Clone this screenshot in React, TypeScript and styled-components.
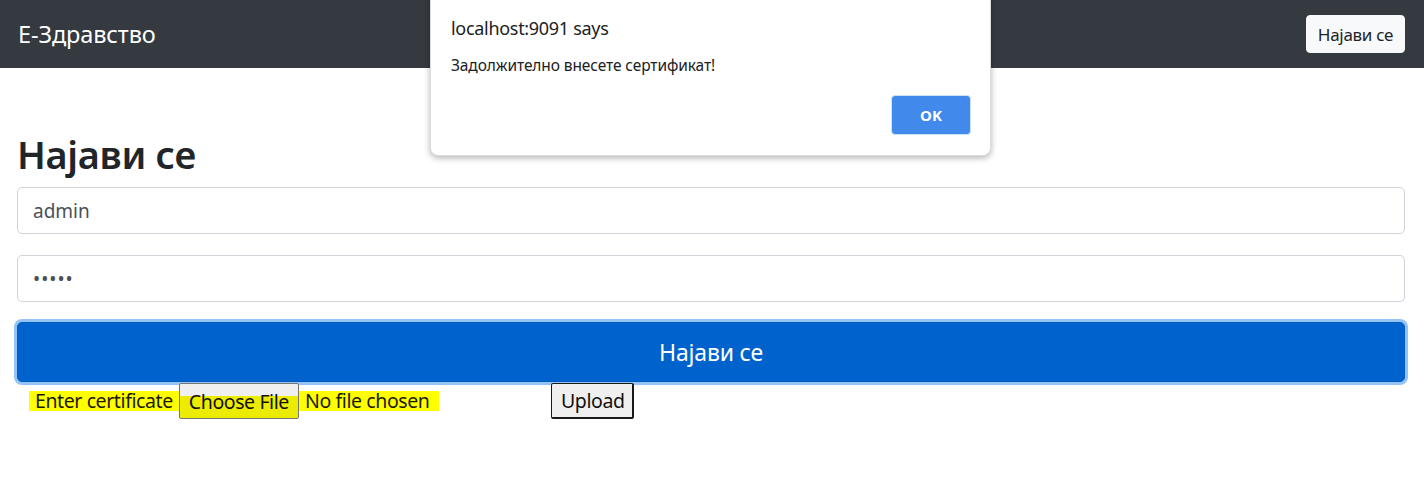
import React from "react";
import styled, { createGlobalStyle } from "styled-components";

const GlobalStyle = createGlobalStyle`
  html, body { margin: 0; padding: 0; background: #fff; }
  body {
    font-family: "Noto Sans", "Open Sans", "Liberation Sans", sans-serif;
    color: #212529;
  }
  * { box-sizing: border-box; }
`;

const Page = styled.div`
  position: relative;
  width: 1424px;
  height: 481px;
  overflow: hidden;
`;

const NavBar = styled.nav`
  height: 68px;
  background: #343a40;
  display: flex;
  align-items: center;
  justify-content: space-between;
  padding: 0 19px 0 18px;
`;

const Brand = styled.div`
  color: #fff;
  font-size: 23.5px;
  letter-spacing: -0.1px;
`;

const NavButton = styled.button`
  font-family: inherit;
  background: #f8f9fa;
  color: #212529;
  border: 1px solid #f8f9fa;
  border-radius: 4px;
  font-size: 17px;
  height: 38px;
  width: 99px;
  padding: 0;
  letter-spacing: -0.3px;
`;

const Main = styled.main`
  padding: 62px 19px 0 17px;
  display: flex;
  flex-direction: column;
`;

const Title = styled.h1`
  margin: 0 0 9px;
  font-size: 38px;
  font-weight: 600;
  line-height: 48px;
  color: #212529;
  letter-spacing: -0.3px;
`;

const Field = styled.input<{ $mb: number }>`
  width: 100%;
  height: 47px;
  border: 1px solid #ced4da;
  border-radius: 5px;
  padding: 0 15px;
  font-family: inherit;
  font-size: 19px;
  color: #495057;
  background: #fff;
  margin-bottom: ${(p) => p.$mb}px;
  outline: none;
  &[type="password"] { letter-spacing: 1px; }
`;

const SubmitButton = styled.button`
  width: 100%;
  height: 60px;
  margin-top: 3px;
  border: 1px solid #005cbf;
  border-radius: 5px;
  background: #0062cc;
  color: #fff;
  font-family: inherit;
  font-size: 23px;
  box-shadow: 0 0 0 3px #93c3f7;
  letter-spacing: -0.2px;
`;

const FileRow = styled.div`
  display: flex;
  align-items: center;
  height: 36px;
  margin-top: 1px;
  padding-left: 12px;
  font-size: 19.5px;
  color: #1a1a00;
  letter-spacing: -0.4px;
`;

const Highlight = styled.span<{ $pr: number; $pl: number }>`
  background: #ffff00;
  height: 20px;
  line-height: 20px;
  padding: 0 ${(p) => p.$pr}px 0 ${(p) => p.$pl}px;
  display: inline-flex;
  align-items: center;
`;

const FileGroup = styled.div`
  display: flex;
  align-items: center;
  width: 522px;
`;

const NativeButton = styled.button<{ $hl?: boolean }>`
  font-family: inherit;
  font-size: 19.5px;
  height: 36px;
  padding: 0 9px;
  color: #101010;
  background: ${(p) =>
    p.$hl ? "linear-gradient(#efefef 0 35%, #ecec00 35% 100%)" : "#efefef"};
  border: 1px solid #767676;
  border-radius: 2px;
  letter-spacing: -0.4px;
`;

const UploadButton = styled(NativeButton)`
  border: 1px solid #1a1a1a;
  border-right-width: 2px;
  border-bottom-width: 2px;
  width: 83px;
`;

const Dialog = styled.div`
  position: absolute;
  left: 430px;
  top: -10px;
  width: 561px;
  height: 166px;
  background: #fff;
  border: 1px solid #dadce0;
  border-radius: 8px;
  box-shadow: 0 2px 6px rgba(0, 0, 0, 0.3);
  padding: 25px 19px 0 20px;
  display: flex;
  flex-direction: column;
`;

const DialogTitle = styled.div`
  font-size: 18px;
  color: #202124;
  letter-spacing: -0.3px;
`;

const DialogMessage = styled.div`
  margin-top: 14px;
  font-size: 15.5px;
  color: #202124;
  letter-spacing: -0.1px;
`;

const DialogActions = styled.div`
  display: flex;
  justify-content: flex-end;
  margin-top: 19px;
`;

const OkButton = styled.button`
  width: 80px;
  height: 40px;
  border: 1px solid #cfe0fb;
  border-radius: 4px;
  background: #4189eb;
  color: #fff;
  font-family: inherit;
  font-weight: 700;
  font-size: 15px;
`;

export default function App() {
  return (
    <Page>
      <GlobalStyle />
      <NavBar>
        <Brand>E-Здравство</Brand>
        <NavButton>Најави се</NavButton>
      </NavBar>
      <Main>
        <Title>Најави се</Title>
        <Field $mb={21} type="text" defaultValue="admin" readOnly />
        <Field $mb={17} type="password" defaultValue="admin" readOnly />
        <SubmitButton>Најави се</SubmitButton>
        <FileRow>
          <FileGroup>
            <Highlight $pl={6} $pr={6}>Enter certificate</Highlight>
            <NativeButton $hl>Choose File</NativeButton>
            <Highlight $pl={6} $pr={9}>No file chosen</Highlight>
          </FileGroup>
          <UploadButton>Upload</UploadButton>
        </FileRow>
      </Main>
      <Dialog>
        <DialogTitle>localhost:9091 says</DialogTitle>
        <DialogMessage>Задолжително внесете сертификат!</DialogMessage>
        <DialogActions>
          <OkButton>OK</OkButton>
        </DialogActions>
      </Dialog>
    </Page>
  );
}
